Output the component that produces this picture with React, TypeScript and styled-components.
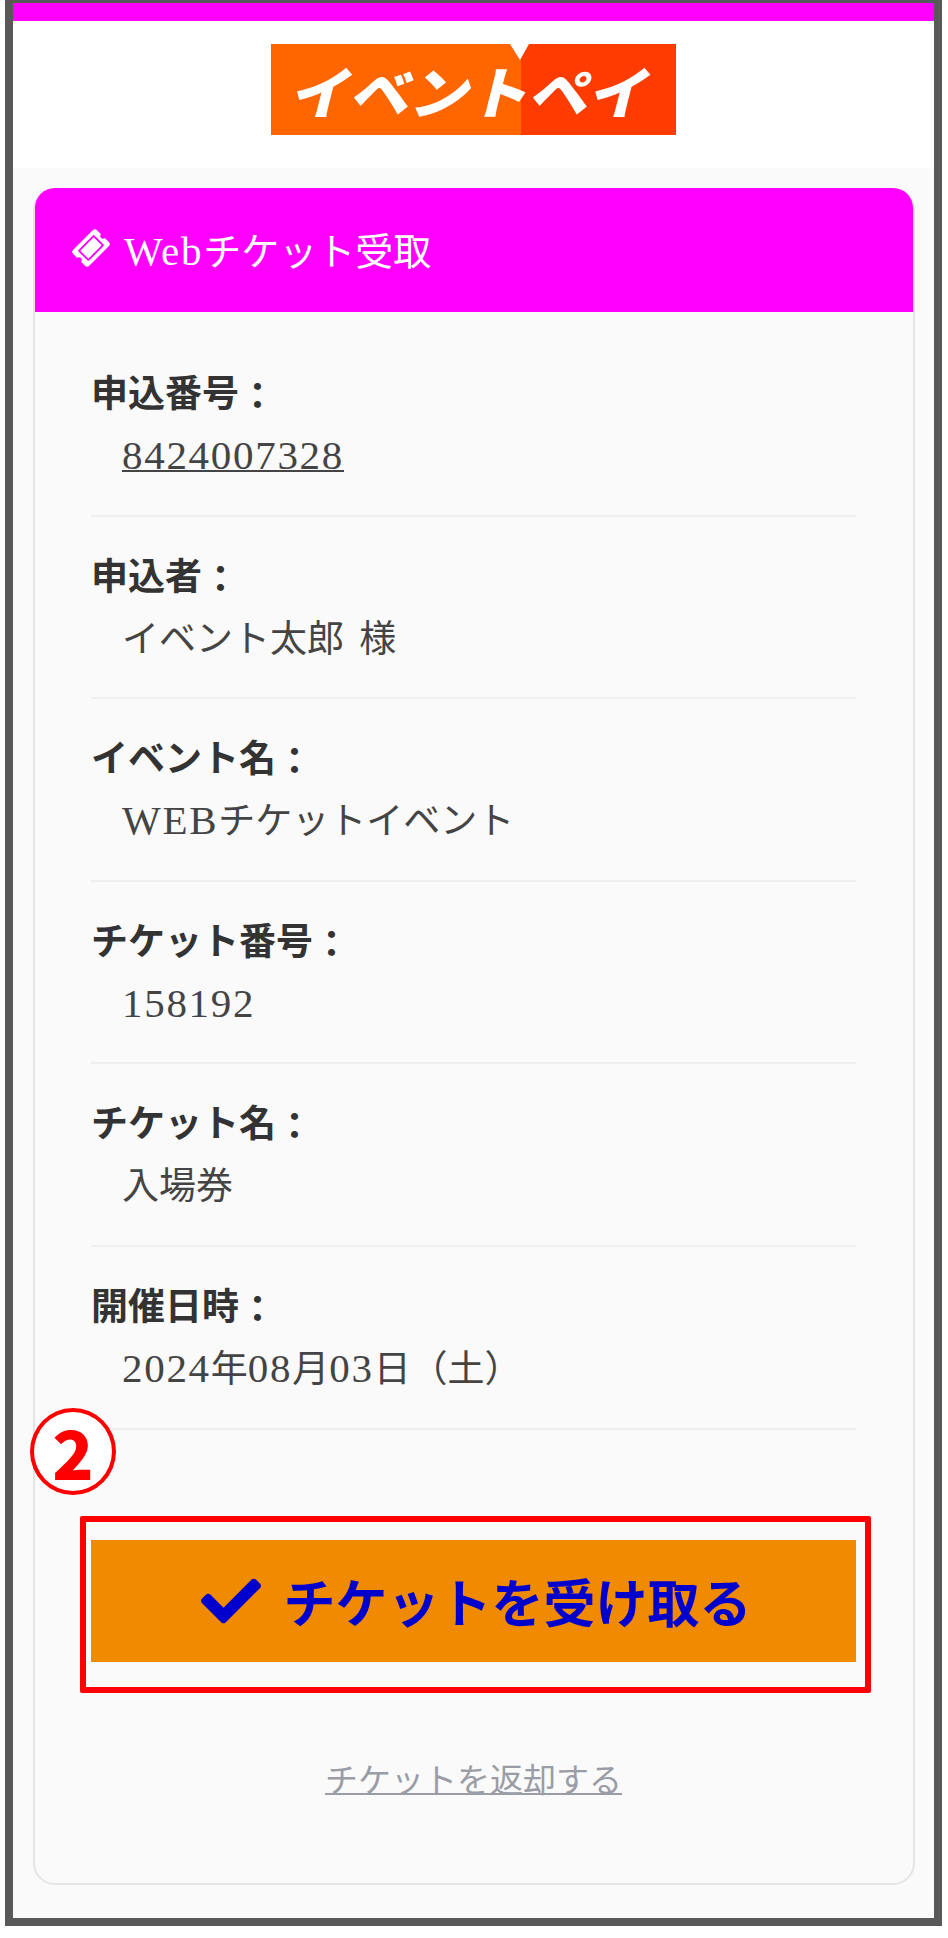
import * as React from 'react';
import styled, { createGlobalStyle } from 'styled-components';
import { FaCheck, FaTicketAlt } from 'react-icons/fa';

const serif = `"Liberation Serif", "Noto Sans CJK JP", serif`;
const sans = `"Noto Sans CJK JP", "Liberation Sans", sans-serif`;

const GlobalStyle = createGlobalStyle`
  html, body {
    margin: 0;
    padding: 0;
    background: #fff;
  }
  * {
    box-sizing: border-box;
  }
`;

const Frame = styled.div`
  width: 937px;
  margin-left: 5px;
  border: solid #595959;
  border-width: 3px 8px 8px;
`;

const TopBar = styled.div`
  height: 18px;
  background: #ff00ff;
`;

const Header = styled.header`
  display: flex;
  justify-content: center;
  padding: 23px 0 33px;
  background: #fff;
`;

const Main = styled.main`
  padding: 20px 19px 33px 20px;
  background: #fafafa;
`;

const Card = styled.section`
  border: 2px solid #e4e4e4;
  border-radius: 22px;
  background: #fafafa;
`;

const CardHeader = styled.div`
  display: flex;
  align-items: center;
  gap: 16px;
  height: 124px;
  margin-top: -2px;
  padding: 0 0 4px 39px;
  border-radius: 20px 20px 0 0;
  background: #ff00ff;
  color: #fff;
  font-family: ${serif};
  font-size: 38px;
`;

const TicketIcon = styled(FaTicketAlt)`
  width: 34px;
  height: 34px;
  transform: rotate(-45deg);
`;

const CardBody = styled.div`
  padding: 22px 57px 77px 56px;
`;

const Row = styled.div`
  padding: 30px 0 26.6px;
  border-bottom: 2px solid #efefef;
`;

const Label = styled.div`
  height: 62px;
  color: #333;
  font-family: ${serif};
  font-size: 37px;
  font-weight: 700;
  line-height: 62px;
`;

const Colon = styled.span`
  vertical-align: -3px;
`;

const Value = styled.div`
  height: 62px;
  padding-left: 31px;
  color: #444;
  font-family: ${serif};
  font-size: 37px;
  line-height: 62px;
  word-spacing: 6px;
`;

const Latin = styled.span`
  font-size: 41px;
  line-height: 1;
  letter-spacing: 1.7px;
`;

const Underlined = styled.a`
  color: #444;
  text-decoration: underline;
  text-decoration-thickness: 2px;
`;

const ActionArea = styled.div`
  position: relative;
  margin-top: 110px;
`;

const ReceiveButton = styled.button`
  display: flex;
  align-items: center;
  justify-content: center;
  gap: 22px;
  width: 100%;
  height: 122px;
  padding: 0 0 0 6px;
  border: 0;
  background: #f08a00;
  color: #0000cd;
  font-family: ${sans};
  font-size: 52px;
  font-weight: 700;
`;

const CheckIcon = styled(FaCheck)`
  width: 60px;
  height: 60px;
`;

const RedBox = styled.div`
  position: absolute;
  inset: -24px -15px -31px -11px;
  border: 6px solid #ff0000;
  border-radius: 2px;
  pointer-events: none;
`;

const StepBadge = styled.div`
  position: absolute;
  top: -132px;
  left: -61px;
  display: flex;
  align-items: center;
  justify-content: center;
  width: 86px;
  height: 87px;
  border: 4px solid #ff0000;
  border-radius: 50%;
  background: #fff;
  color: #ff0000;
  font-family: ${sans};
  font-size: 68px;
  font-weight: 900;
  line-height: 1;
`;

const ReturnLink = styled.a`
  display: block;
  width: fit-content;
  margin: 94px auto 0;
  color: #9a9ca6;
  font-family: ${serif};
  font-size: 33px;
  line-height: 50px;
  text-decoration: underline;
  text-decoration-thickness: 2px;
`;

const Logo = () => (
  <svg width="405" height="91" viewBox="0 0 405 91">
    <rect width="250" height="91" fill="#ff6600" />
    <rect x="250" width="155" height="91" fill="#ff3c00" />
    <polygon points="239,0 258,0 249,16" fill="#fff" />
    <text
      x="21"
      y="70"
      fill="#fff"
      fontFamily={sans}
      fontSize="56"
      fontWeight="900"
      textLength="358"
      lengthAdjust="spacingAndGlyphs"
      transform="skewX(-14) translate(14 0)"
    >
      イベントペイ
    </text>
  </svg>
);

const rows: { label: string; value: React.ReactNode }[] = [
  {
    label: '申込番号',
    value: (
      <Underlined>
        <Latin>8424007328</Latin>
      </Underlined>
    ),
  },
  { label: '申込者', value: 'イベント太郎 様' },
  {
    label: 'イベント名',
    value: (
      <>
        <Latin>WEB</Latin>チケットイベント
      </>
    ),
  },
  { label: 'チケット番号', value: <Latin>158192</Latin> },
  { label: 'チケット名', value: '入場券' },
  {
    label: '開催日時',
    value: (
      <>
        <Latin>2024</Latin>年<Latin>08</Latin>月<Latin>03</Latin>日（土）
      </>
    ),
  },
];

const App = () => (
  <>
    <GlobalStyle />
    <Frame>
      <TopBar />
      <Header>
        <Logo />
      </Header>
      <Main>
        <Card>
          <CardHeader>
            <TicketIcon />
            <span>
              <Latin>Web</Latin>チケット受取
            </span>
          </CardHeader>
          <CardBody>
            {rows.map((row) => (
              <Row key={row.label}>
                <Label>
                  {row.label}
                  <Colon>：</Colon>
                </Label>
                <Value>{row.value}</Value>
              </Row>
            ))}
            <ActionArea>
              <ReceiveButton>
                <CheckIcon />
                チケットを受け取る
              </ReceiveButton>
              <RedBox />
              <StepBadge>2</StepBadge>
            </ActionArea>
            <ReturnLink>チケットを返却する</ReturnLink>
          </CardBody>
        </Card>
      </Main>
    </Frame>
  </>
);

export default App;
